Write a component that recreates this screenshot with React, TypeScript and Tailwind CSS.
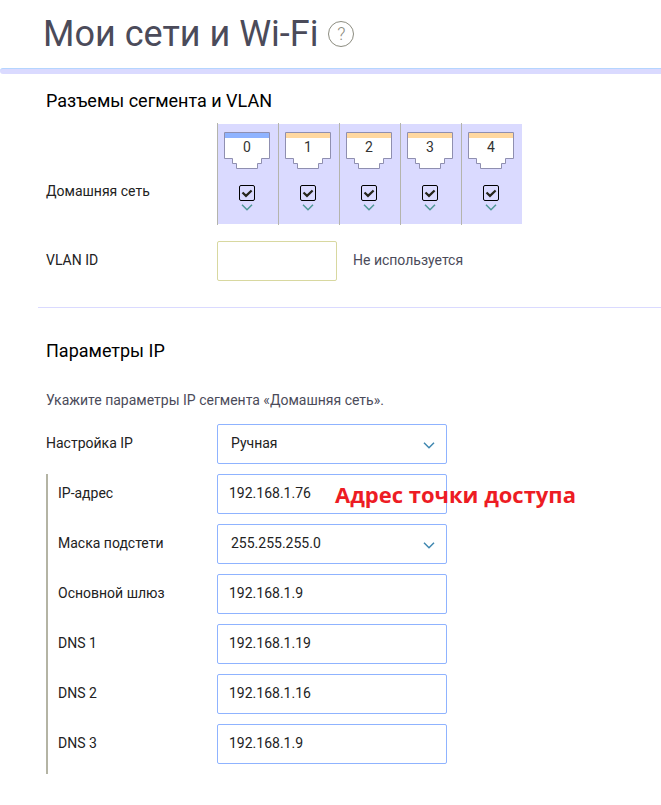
import { useState } from "react";

interface PortProps {
    index: number;
    color: string;
}

interface FieldProps {
    id: string;
    label: string;
    value: string;
    options?: string[];
    nested?: boolean;
    note?: string;
}

const ports: PortProps[] = [
    { index: 0, color: "#8fb3ff" },
    { index: 1, color: "#ffd8a0" },
    { index: 2, color: "#ffd8a0" },
    { index: 3, color: "#ffd8a0" },
    { index: 4, color: "#ffd8a0" },
];

const fields: FieldProps[] = [
    { id: "address", label: "IP-адрес", value: "192.168.1.76", note: "Адрес точки доступа" },
    { id: "mask", label: "Маска подстети", value: "255.255.255.0", options: ["255.255.255.0", "255.255.0.0"] },
    { id: "gateway", label: "Основной шлюз", value: "192.168.1.9" },
    { id: "dns1", label: "DNS 1", value: "192.168.1.19" },
    { id: "dns2", label: "DNS 2", value: "192.168.1.16" },
    { id: "dns3", label: "DNS 3", value: "192.168.1.9" },
];

function Chevron({ className }: { className: string }) {
    return (
        <svg viewBox="0 0 12 7" fill="none" stroke="currentColor" strokeWidth="1.5" className={className} aria-hidden="true">
            <path d="M1 .8l5 5 5-5" />
        </svg>
    );
}

function Port({ index, color }: PortProps) {
    const [checked, setChecked] = useState(true);

    return (
        <li className="w-[61px] border-l border-[#b4b4ac] py-px">
            <label className="flex h-[100px] flex-col items-center bg-[#dadaff] pt-2 pr-0.5">
                <svg width="46" height="37" viewBox="0 0 46 37" fill="none" aria-hidden="true">
                    <path d="M.5.5h45v26h-8v5h-4v5h-21v-5h-4v-5h-8z" fill="#fff" />
                    <path d="M1 1h44v5H1z" fill={color} />
                    <path d="M.5.5h45v26h-8v5h-4v5h-21v-5h-4v-5h-8z" stroke="#8f8fb0" />
                    <text x="23" y="20" textAnchor="middle" fontSize="14" fill="#333" fontFamily="Roboto, sans-serif">{index}</text>
                </svg>
                <span className="mt-4 grid size-4">
                    <input
                        type="checkbox"
                        checked={checked}
                        onChange={() => setChecked(!checked)}
                        aria-label={`Порт ${index}`}
                        className="col-start-1 row-start-1 size-4 appearance-none rounded-xs border border-black"
                    />
                    {checked && (
                        <svg viewBox="0 0 16 16" fill="none" stroke="#26261c" strokeWidth="2.2" className="pointer-events-none col-start-1 row-start-1 size-4">
                            <path d="M3.5 7.5L7 10.9l5.6-5.4" />
                        </svg>
                    )}
                </span>
                <Chevron className="mt-[3px] h-[7px] w-3 text-[#4f9797]" />
            </label>
        </li>
    );
}

function Field({ id, label, value, options, nested, note }: FieldProps) {
    const [current, setCurrent] = useState(value);
    const box = "h-10 w-full rounded-xs border border-[#8fb3ff] bg-white pb-0.5 text-sm text-[#222] outline-none";

    return (
        <div className="flex h-10">
            <label htmlFor={id} className={nested ? "w-[159px] shrink-0 pt-[9px]" : "w-[171px] shrink-0 pt-[9px]"}>{label}</label>
            <div className="relative w-[230px]">
                {options ? (
                    <>
                        <select id={id} value={current} onChange={(e) => setCurrent(e.target.value)} className={`${box} appearance-none pl-[13px]`}>
                            {options.map((option) => <option key={option}>{option}</option>)}
                        </select>
                        <Chevron className="pointer-events-none absolute top-[18px] right-3 h-[7px] w-3 text-[#3f87b0]" />
                    </>
                ) : (
                    <input id={id} type="text" value={current} onChange={(e) => setCurrent(e.target.value)} className={`${box} pl-[11px]`} />
                )}
                {note && (
                    <strong className="pointer-events-none absolute top-1 left-[118px] font-['Open_Sans',sans-serif] text-[22px] leading-8 font-bold whitespace-nowrap text-[#ed1c24]">
                        {note}
                    </strong>
                )}
            </div>
        </div>
    );
}

export default function App() {
    return (
        <main className="min-h-screen bg-white font-[Roboto,sans-serif] text-sm leading-5 text-[#222]">
            {/* Заголовок страницы */}
            <header className="flex h-[68px] items-center gap-[10px] pl-[43px]">
                <h1 className="text-4xl leading-10 text-[#4b4b5a]">Мои сети и Wi-Fi</h1>
                <button type="button" aria-label="Справка" className="flex size-[26px] items-center justify-center rounded-full border border-[#8c8c80] text-lg leading-6 font-light text-[#8c8c80]">
                    ?
                </button>
            </header>
            <div className="h-[6px] rounded-l-sm border-t border-[#b5d5ff] bg-[#dadaff]" />

            {/* Порты и VLAN */}
            <section className="ml-[38px] border-b border-[#dadaff] pt-[15px] pb-[26px] pl-2">
                <h2 className="text-lg leading-6 text-black">Разъемы сегмента и VLAN</h2>
                <div className="mt-[10px] flex">
                    <span className="w-[171px] shrink-0 pt-[58px]">Домашняя сеть</span>
                    <ul className="flex">
                        {ports.map((port) => <Port key={port.index} {...port} />)}
                    </ul>
                </div>
                <div className="mt-4 flex h-10">
                    <label htmlFor="vlan" className="w-[171px] shrink-0 pt-[9px]">VLAN ID</label>
                    <input id="vlan" type="text" className="h-10 w-[120px] rounded-xs border border-[#d8d8a0] px-3 outline-none" />
                    <span className="pt-[9px] pl-4 text-[#4b4b5a]">Не используется</span>
                </div>
            </section>

            {/* Параметры IP */}
            <section className="pt-[31px] pb-8 pl-[46px]">
                <h2 className="text-lg leading-6 text-black">Параметры IP</h2>
                <p className="mt-[27px] text-[#4b4b5a]">Укажите параметры IP сегмента «Домашняя сеть».</p>
                <div className="mt-[14px]">
                    <Field id="mode" label="Настройка IP" value="Ручная" options={["Ручная", "Автоматическая"]} />
                </div>
                <div className="mt-[10px] flex flex-col gap-[10px] border-l-2 border-[#b4b4a4] pb-[10px] pl-[10px]">
                    {fields.map((field) => <Field key={field.id} nested {...field} />)}
                </div>
            </section>
        </main>
    );
}
